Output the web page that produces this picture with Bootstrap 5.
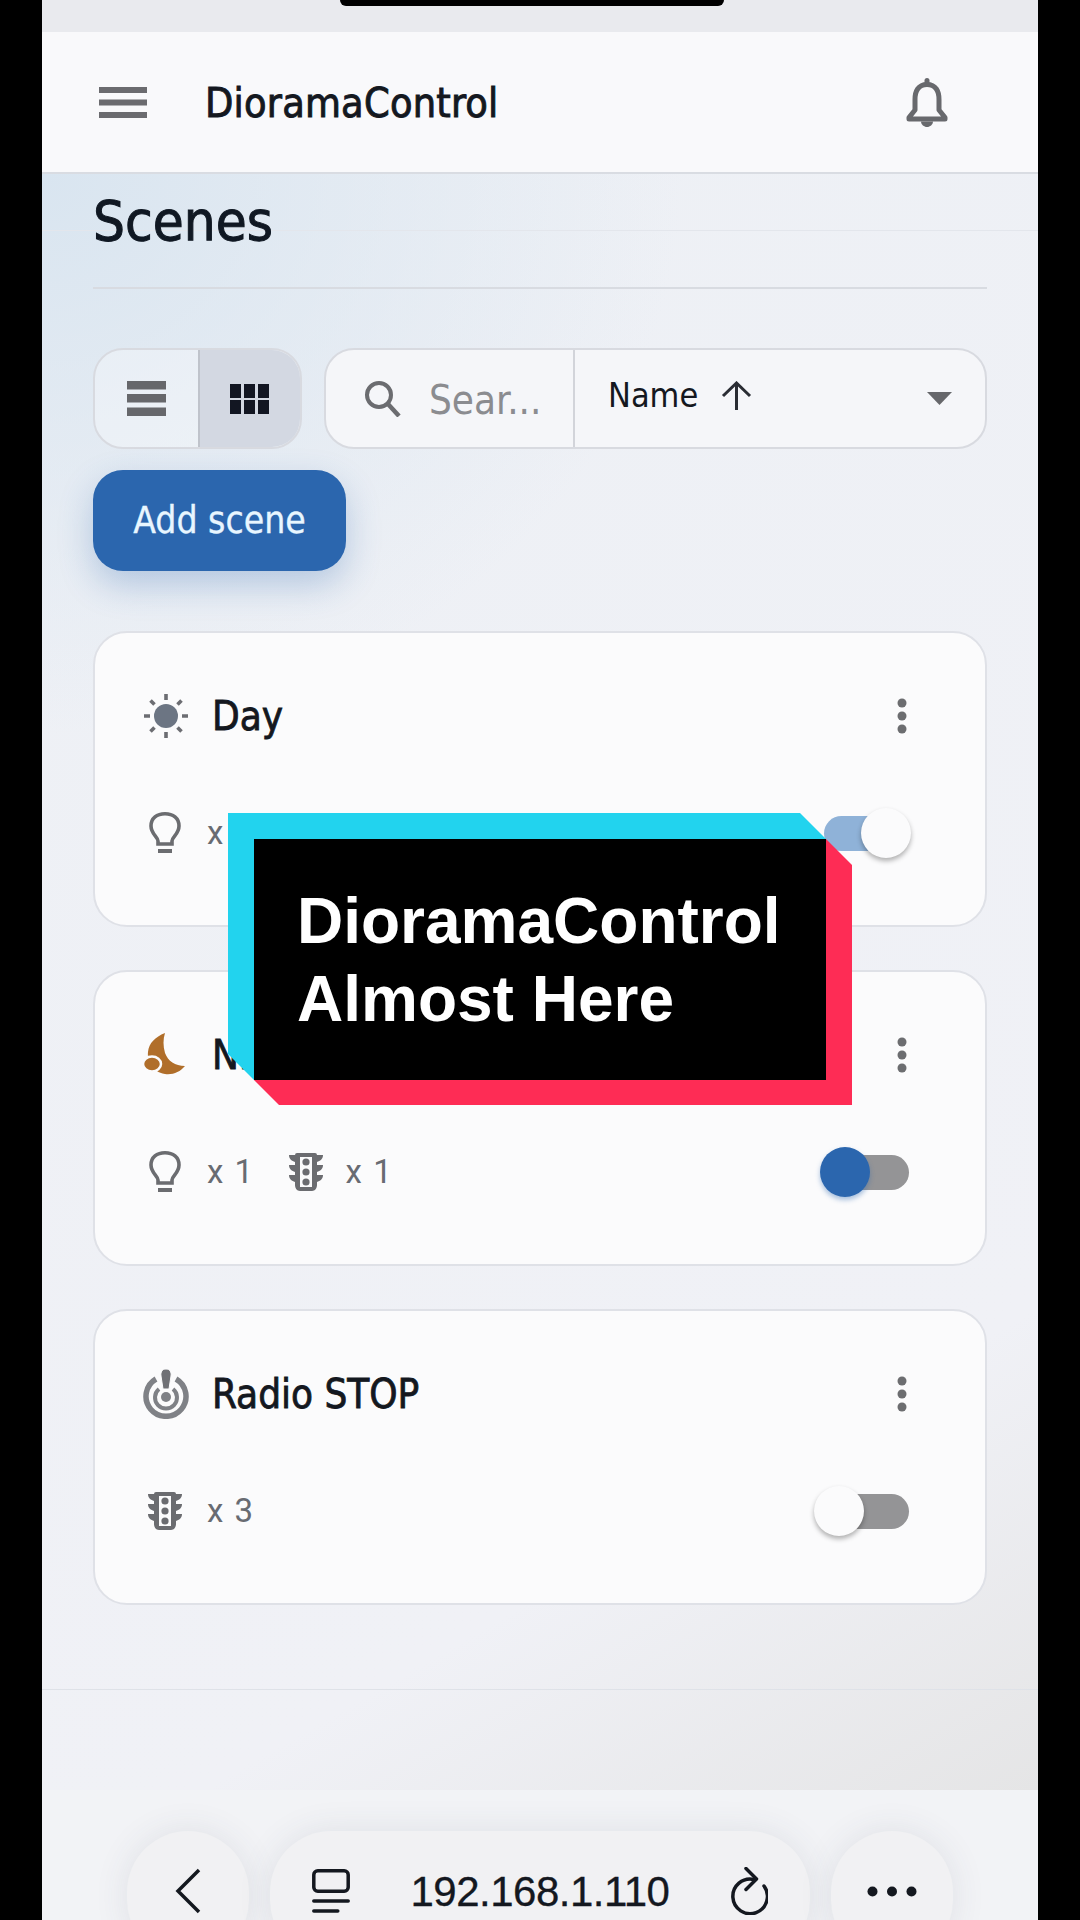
<!DOCTYPE html>
<html lang="en">
<head>
  <meta charset="UTF-8">
  <title>DioramaControl</title>
  <meta name="viewport" content="width=device-width, initial-scale=1">
  <link href="https://cdn.jsdelivr.net/npm/bootstrap@5.3.3/dist/css/bootstrap.min.css" rel="stylesheet">
  <style>
    body {
      background: #000;
      font-family: "DejaVu Sans Condensed", "DejaVu Sans", sans-serif;
      color: #14181f;
    }
    .phone {
      position: relative;
      width: 996px;
      height: 1920px;
      margin: 0 42px;
      overflow: hidden;
      background: #f2f3f6;
    }
    .notch {
      position: absolute;
      top: 0;
      left: 298px;
      width: 384px;
      height: 6px;
      background: #000;
      border-radius: 0 0 12px 12px;
    }
    .status-strip { height: 32px; background: #e9eaee; }
    .app-bar {
      height: 142px;
      padding: 0 90px 0 57px;
      background: #f9f9fb;
      border-bottom: 2px solid #d9dce2;
    }
    .app-title {
      margin: 4px 0 0 58px;
      font-size: 41px;
      letter-spacing: .2px;
      -webkit-text-stroke: .9px #14181f;
    }
    .page-main {
      height: 1616px;
      padding: 0 51px;
      background:
        linear-gradient(#e3e6ec, #e3e6ec) 0 56px / 100% 1px no-repeat,
        radial-gradient(ellipse 640px 560px at 0 0, #d9e5f0 0, rgba(217,229,240,0) 100%),
        linear-gradient(150deg, #edf0f5 0, #f0f1f6 78%, #e5e5e6 100%);
    }
    .page-title {
      height: 115px;
      margin: 0;
      padding-top: 12px;
      font-size: 56px;
      line-height: 70px;
      color: #101823;
      border-bottom: 2px solid #d8dbe1;
      -webkit-text-stroke: 1px #101823;
    }
    .tool-row { height: 101px; margin-top: 59px; gap: 22px; }
    .view-toggle {
      width: 209px;
      border: 2px solid #d8dae0;
      border-radius: 30px;
      overflow: hidden;
      background: rgba(255,255,255,.3);
    }
    .view-toggle > div { width: 50%; }
    .view-toggle > div + div { background: #d3d8e2; border-left: 2px solid #bfc3cb; }
    .search-sort {
      border: 2px solid #d8dae0;
      border-radius: 30px;
      overflow: hidden;
      background: #f5f6f9;
    }
    .search-part { width: 247px; padding-left: 38px; gap: 28px; }
    .search-word { font-size: 40px; color: #8b8c90; line-height: 1; margin-top: 3px; }
    .sort-part { border-left: 2px solid #d2d4da; padding: 0 33px; }
    .sort-word { font-size: 34px; color: #14181f; margin-right: 23px; margin-top: -6px; }
    .sort-arrow { margin-top: -6px; }
    .add-btn {
      display: block;
      width: 253px;
      height: 101px;
      margin-top: 21px;
      padding: 0;
      font-size: 37px;
      color: #e8f6ff;
      background: #2b66ae;
      border: 0;
      border-radius: 30px;
      box-shadow: 0 14px 34px rgba(43,102,174,.28);
      -webkit-text-stroke: .3px #e8f6ff;
    }
    .scene-list { margin-top: 60px; gap: 43px; }
    .scene-card {
      height: 296px;
      padding: 58px 78px 0 48px;
      background: #fbfbfc;
      border: 2px solid #dfe1e7;
      border-radius: 34px;
    }
    .card-top, .card-bottom { height: 50px; }
    .card-bottom { margin-top: 67px; }
    .scene-name {
      margin-left: 23px;
      font-size: 40px;
      -webkit-text-stroke: .8px #14181f;
    }
    .bulb-icon { margin-left: 6px; }
    .light-icon { margin-left: 5px; }
    .count-word {
      margin-left: 23px;
      margin-right: 34px;
      font-family: Roboto, "Liberation Sans", sans-serif;
      font-size: 33px;
      letter-spacing: 1.5px;
      color: #686b72;
    }
    .bulb-icon + .count-word { margin-left: 26px; }
    .light-icon + .count-word { margin-left: 25px; }
    .mini-switch {
      position: relative;
      display: block;
      width: 85px;
      height: 35px;
      margin-right: -2px;
      border-radius: 18px;
      background: #949496;
    }
    .mini-switch.is-on { background: #8fb2d8; }
    .switch-knob {
      position: absolute;
      top: -8px;
      width: 50px;
      height: 50px;
      border-radius: 50%;
      background: #fbfbfc;
      box-shadow: 0 3px 5px rgba(0,0,0,.3);
    }
    .switch-knob.knob-blue { background: #2b66ae; box-shadow: 0 3px 5px rgba(43,102,174,.4); }
    .foot-line { margin: auto -51px 0; height: 101px; border-top: 1px solid #dfe2e8; }
    .browser-bar {
      height: 130px;
      padding: 41px 0 0 85px;
      gap: 21px;
      background: #f2f3f6;
    }
    .browser-pill {
      height: 130px;
      padding-bottom: 10px;
      border-radius: 61px;
      background: #f1f1f3;
      box-shadow: 0 0 34px rgba(60,70,90,.1);
    }
    .pill-round { width: 122px; }
    .pill-url { width: 540px; padding-left: 42px; padding-right: 42px; }
    .url-word {
      font-family: "Liberation Sans", Arial, sans-serif;
      font-size: 42px;
      color: #14181f;
      letter-spacing: -.5px;
      -webkit-text-stroke: .3px #14181f;
    }
    .caption-box {
      position: absolute;
      left: 186px;
      top: 813px;
      width: 624px;
      height: 292px;
    }
    .caption-box::before, .caption-box::after {
      content: "";
      position: absolute;
      inset: 0;
    }
    .caption-box::before { background: #22d3ee; clip-path: polygon(0 0, 572px 0, 598px 26px, 26px 267px, 0 241px); }
    .caption-box::after { background: #fe2c55; clip-path: polygon(598px 26px, 624px 52px, 624px 292px, 51px 292px, 26px 267px); }
    .caption-text {
      position: absolute;
      z-index: 1;
      left: 26px;
      top: 26px;
      width: 572px;
      height: 241px;
      padding: 43px 0 0 43px;
      background: #000;
      color: #fff;
      font-family: "Liberation Sans", Arial, sans-serif;
      font-weight: 700;
      font-size: 64px;
      line-height: 78px;
    }
  </style>
</head>
<body>
  <svg width="0" height="0" class="d-block">
    <symbol id="ic-bulb" viewBox="0 0 32 42">
      <path d="M9 32v-3c0-4-7-7-7-15C2 6 8 1.800 16 1.800S30 6 30 14c0 8-7 11-7 15v3z" fill="none" stroke="#6b6c70" stroke-width="3.600"/>
      <rect x="9" y="37" width="14" height="4" fill="#6b6c70"/>
    </symbol>
    <symbol id="ic-light" viewBox="0 0 34 38">
      <path d="M8 0h18a2 2 0 0 1 2 2h6c0 4-3 6-6 7v3h6c0 4-3 6-6 7v3h6c0 4-3 6-6 7v3c0 3-2 6-5 6H11c-3 0-5-3-5-6v-3c-3-1-6-3-6-7h6v-3c-3-1-6-3-6-7h6V9C3 8 0 6 0 2h6a2 2 0 0 1 2-2z" fill="#6b6c70"/>
      <rect x="11" y="4" width="12" height="30" fill="#fbfbfc"/>
      <circle cx="17" cy="9" r="3.600" fill="#6b6c70"/>
      <circle cx="17" cy="19" r="3.600" fill="#6b6c70"/>
      <circle cx="17" cy="29" r="3.600" fill="#6b6c70"/>
    </symbol>
    <symbol id="ic-dots" viewBox="0 0 10 36">
      <circle cx="5" cy="5" r="4.500" fill="#6c6d70"/>
      <circle cx="5" cy="18" r="4.500" fill="#6c6d70"/>
      <circle cx="5" cy="31" r="4.500" fill="#6c6d70"/>
    </symbol>
  </svg>

  <div class="phone d-flex flex-column">
    <div class="notch"></div>
    <div class="status-strip"></div>

    <nav class="navbar app-bar flex-nowrap justify-content-start">
      <svg width="48" height="31" viewBox="0 0 48 31"><path d="M0 0h48v6H0zM0 12.500h48v6H0zM0 25h48v6H0z" fill="#6b6b6f"/></svg>
      <span class="app-title">DioramaControl</span>
      <svg class="ms-auto" width="42" height="49" viewBox="0 0 42 49">
        <rect x="18.500" y="0" width="5" height="8" rx="2.500" fill="#68696d"/>
        <path d="M21 6.500c-9 0-12 7-12 15V32l-6 7.500v1.500h36v-1.500L33 32V21.500c0-8-3-15-12-15z" fill="none" stroke="#68696d" stroke-width="5" stroke-linejoin="round"/>
        <path d="M15 43.500h12c0 3-3 5.500-6 5.500s-6-2.500-6-5.500z" fill="#68696d"/>
      </svg>
    </nav>

    <main class="page-main d-flex flex-column">
      <h1 class="page-title fw-normal">Scenes</h1>

      <div class="tool-row d-flex">
        <div class="view-toggle d-flex">
          <div class="d-flex align-items-center justify-content-center">
            <svg width="39" height="35" viewBox="0 0 39 35"><path d="M0 0h39v8.500H0zM0 13h39v8.500H0zM0 26.500h39V35H0z" fill="#66676b"/></svg>
          </div>
          <div class="d-flex align-items-center justify-content-center">
            <svg width="39" height="30" viewBox="0 0 39 30"><path d="M0 0h11v14H0zM14 0h11v14H14zM28 0h11v14H28zM0 16h11v14H0zM14 16h11v14H14zM28 16h11v14H28z" fill="#121622"/></svg>
          </div>
        </div>
        <div class="search-sort d-flex flex-grow-1">
          <div class="search-part d-flex align-items-center flex-shrink-0">
            <svg width="37" height="37" viewBox="0 0 37 37" class="flex-shrink-0">
              <circle cx="15" cy="15" r="12" fill="none" stroke="#6b6c70" stroke-width="4"/>
              <path d="M24 24l11 12" stroke="#6b6c70" stroke-width="4.500"/>
            </svg>
            <span class="search-word">Sear...</span>
          </div>
          <div class="sort-part d-flex align-items-center flex-grow-1">
            <span class="sort-word">Name</span>
            <svg class="sort-arrow" width="31" height="29" viewBox="0 0 31 29">
              <path d="M15.500 29V2M2 15L15.500 2 29 15" fill="none" stroke="#2a2d34" stroke-width="3"/>
            </svg>
            <svg class="ms-auto" width="25" height="13" viewBox="0 0 25 13"><path d="M0 0h25L12.500 13z" fill="#66676b"/></svg>
          </div>
        </div>
      </div>

      <button type="button" class="btn add-btn">Add scene</button>

      <div class="scene-list d-flex flex-column">
        <div class="card scene-card">
          <div class="card-top d-flex align-items-center">
            <svg width="46" height="46" viewBox="0 0 46 46" class="flex-shrink-0">
              <circle cx="23" cy="23" r="12" fill="#6c7583"/>
              <path d="M23 1v6M23 39v6M1 23h6M39 23h6M7.500 7.500l4 4M34.500 34.500l4 4M38.500 7.500l-4 4M11.500 34.500l-4 4" stroke="#6c6d72" stroke-width="3.600"/>
            </svg>
            <span class="scene-name">Day</span>
            <svg class="ms-auto" width="10" height="36"><use href="#ic-dots"/></svg>
          </div>
          <div class="card-bottom d-flex align-items-center">
            <svg class="bulb-icon" width="32" height="42"><use href="#ic-bulb"/></svg>
            <span class="count-word">x 1</span>
            <svg width="34" height="38"><use href="#ic-light"/></svg>
            <span class="count-word">x 1</span>
            <span class="mini-switch is-on ms-auto"><span class="switch-knob" style="left:37px"></span></span>
          </div>
        </div>

        <div class="card scene-card">
          <div class="card-top d-flex align-items-center">
            <svg width="46" height="46" viewBox="0 0 46 46" class="flex-shrink-0">
              <path d="M22 1C12 5 6 11 5 20c-1 8 4 20 17 22 8 1 15-2 20-8-10 0-17-5-20-13-2-7-2-14 0-20z" fill="#b06e2a"/>
              <ellipse cx="9" cy="32" rx="9" ry="7.500" fill="#b06e2a" stroke="#fbfbfc" stroke-width="2.500"/>
            </svg>
            <span class="scene-name">Night</span>
            <svg class="ms-auto" width="10" height="36"><use href="#ic-dots"/></svg>
          </div>
          <div class="card-bottom d-flex align-items-center">
            <svg class="bulb-icon" width="32" height="42"><use href="#ic-bulb"/></svg>
            <span class="count-word">x 1</span>
            <svg width="34" height="38"><use href="#ic-light"/></svg>
            <span class="count-word">x 1</span>
            <span class="mini-switch ms-auto"><span class="switch-knob knob-blue" style="left:-4px"></span></span>
          </div>
        </div>

        <div class="card scene-card">
          <div class="card-top d-flex align-items-center">
            <svg width="46" height="50" viewBox="0 0 46 50" class="flex-shrink-0">
              <path d="M13 10a20 20 0 1 0 20 0" fill="none" stroke="#7f8186" stroke-width="5.500"/>
              <path d="M16 20a11 11 0 1 0 14 0" fill="none" stroke="#7f8186" stroke-width="4"/>
              <circle cx="23" cy="28" r="5" fill="#7f8186"/>
              <path d="M23 0c4 0 5.500 3 5 7l-2 13h-6l-2-13c-.5-4 1-7 5-7z" fill="#6f7075" stroke="#fbfbfc"/>
            </svg>
            <span class="scene-name">Radio STOP</span>
            <svg class="ms-auto" width="10" height="36"><use href="#ic-dots"/></svg>
          </div>
          <div class="card-bottom d-flex align-items-center">
            <svg class="light-icon" width="34" height="38"><use href="#ic-light"/></svg>
            <span class="count-word">x 3</span>
            <span class="mini-switch ms-auto"><span class="switch-knob" style="left:-10px"></span></span>
          </div>
        </div>
      </div>

      <div class="foot-line"></div>
    </main>

    <div class="browser-bar d-flex flex-shrink-0">
      <div class="browser-pill pill-round d-flex align-items-center justify-content-center">
        <svg width="28" height="46" viewBox="0 0 28 46"><path d="M25 2L4 23l21 21" fill="none" stroke="#14181f" stroke-width="3.500"/></svg>
      </div>
      <div class="browser-pill pill-url d-flex align-items-center justify-content-between">
        <svg width="38" height="44" viewBox="0 0 38 44">
          <rect x="1.800" y="1.800" width="34.400" height="20.500" rx="4" fill="none" stroke="#14181f" stroke-width="3.500"/>
          <path d="M1.800 32h34.400M1.800 42h24" stroke="#14181f" stroke-width="3.500" stroke-linecap="round"/>
        </svg>
        <span class="url-word">192.168.1.110</span>
        <svg width="38" height="48" viewBox="0 0 38 48">
          <path d="M24 12.500A17.300 17.300 0 1 0 34 19" fill="none" stroke="#14181f" stroke-width="3.500" stroke-linecap="round"/>
          <path d="M16 1.500L26.500 12 16 22.500" fill="none" stroke="#14181f" stroke-width="3.500" stroke-linecap="round" stroke-linejoin="round"/>
        </svg>
      </div>
      <div class="browser-pill pill-round d-flex align-items-center justify-content-center">
        <svg width="50" height="11" viewBox="0 0 50 11"><circle cx="5.500" cy="5.500" r="5" fill="#14181f"/><circle cx="25" cy="5.500" r="5" fill="#14181f"/><circle cx="44.500" cy="5.500" r="5" fill="#14181f"/></svg>
      </div>
    </div>

    <div class="caption-box">
      <div class="caption-text">DioramaControl<br>Almost Here</div>
    </div>
  </div>

  <script src="https://cdn.jsdelivr.net/npm/bootstrap@5.3.3/dist/js/bootstrap.bundle.min.js"></script>
</body>
</html>
